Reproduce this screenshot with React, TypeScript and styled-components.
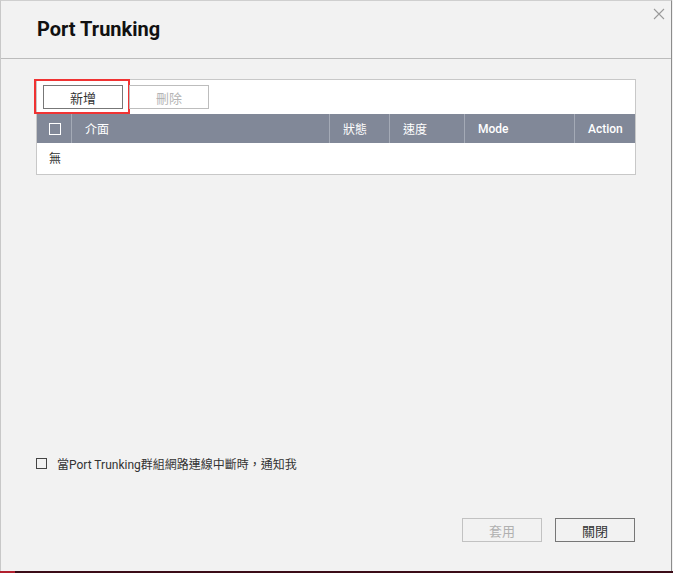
import React from 'react';
import styled, { createGlobalStyle } from 'styled-components';

const GlobalStyle = createGlobalStyle`
  html, body {
    margin: 0;
    padding: 0;
    background: #f0f0f0;
  }
  body {
    font-family: Roboto, 'Liberation Sans', 'Noto Sans CJK TC', sans-serif;
    color: #333;
  }
  * {
    box-sizing: border-box;
  }
`;

const columns = [
  { label: '介面', width: 258, latin: false },
  { label: '狀態', width: 60, latin: false },
  { label: '速度', width: 75, latin: false },
  { label: 'Mode', width: 110, latin: true },
  { label: 'Action', width: 0, latin: true },
];

export default function App() {
  return (
    <>
      <GlobalStyle />
      <Page>
        <Dialog>
          <Header>
            <Title>Port Trunking</Title>
            <CloseButton aria-label='close'>
              <svg width='12' height='12' viewBox='0 0 12 12'>
                <path d='M1 1 L11 11 M11 1 L1 11' stroke='#9a9a9a' strokeWidth='1.1' />
              </svg>
            </CloseButton>
          </Header>
          <Body>
            <Panel>
              <Toolbar>
                <Highlight>
                  <ToolButton>新增</ToolButton>
                </Highlight>
                <ToolButton disabled>刪除</ToolButton>
              </Toolbar>
              <Table>
                <HeadRow>
                  <CheckCell>
                    <HeadCheck />
                  </CheckCell>
                  {columns.map((c) => (
                    <HeadCell key={c.label} $width={c.width} $latin={c.latin}>
                      {c.label}
                    </HeadCell>
                  ))}
                </HeadRow>
                <EmptyRow>無</EmptyRow>
              </Table>
            </Panel>
            <Spacer />
            <NotifyRow>
              <Check />
              <NotifyText>當Port Trunking群組網路連線中斷時，通知我</NotifyText>
            </NotifyRow>
            <Footer>
              <FooterButton disabled>套用</FooterButton>
              <FooterButton>關閉</FooterButton>
            </Footer>
          </Body>
        </Dialog>
        <BottomStrip />
      </Page>
    </>
  );
}

const Page = styled.div`
  width: 673px;
  height: 573px;
  display: flex;
  flex-direction: column;
  overflow: hidden;
`;

const Dialog = styled.div`
  position: relative;
  width: 672px;
  height: 571px;
  background: #f2f2f2;
  border-top: 1px solid #cfcfcf;
  border-left: 1px solid #c8c8c8;
  border-right: 1px solid #8c8c8c;
  display: flex;
  flex-direction: column;
`;

const Header = styled.div`
  height: 58px;
  flex-shrink: 0;
  border-bottom: 1px solid #bcbcbc;
  display: flex;
  align-items: center;
  padding-left: 36px;
  padding-bottom: 1px;
`;

const Title = styled.h1`
  margin: 0;
  font-size: 20px;
  font-weight: 700;
  color: #111;
  font-family: Roboto, 'Liberation Sans', sans-serif;
`;

const CloseButton = styled.div`
  position: absolute;
  top: 7px;
  right: 6px;
  width: 12px;
  height: 12px;
  display: flex;
  cursor: pointer;
`;

const Body = styled.div`
  flex: 1;
  display: flex;
  flex-direction: column;
  padding: 20px 36px 29px 35px;
`;

const Panel = styled.div`
  width: 600px;
  background: #fff;
  border: 1px solid #c8c8c8;
`;

const Toolbar = styled.div`
  height: 34px;
  display: flex;
  align-items: flex-start;
  gap: 6px;
  padding: 5px 0 0 6px;
`;

const Highlight = styled.div`
  margin: -6px -7px 0 -9px;
  padding: 4px 5px 3px 7px;
  border: 2px solid #f03333;
  display: flex;
`;

const ToolButton = styled.button`
  width: 80px;
  height: 24px;
  background: #fff;
  border: 1px solid ${(p) => (p.disabled ? '#bdbdbd' : '#777')};
  color: ${(p) => (p.disabled ? '#b5b5b5' : '#333')};
  font-size: 13px;
  font-family: Roboto, 'Liberation Sans', 'Noto Sans CJK TC', sans-serif;
  padding: 0;
  cursor: pointer;
`;

const Table = styled.div`
  display: flex;
  flex-direction: column;
`;

const HeadRow = styled.div`
  height: 29px;
  display: flex;
  background: #818898;
  color: #fff;
  font-size: 12px;
`;

const CheckCell = styled.div`
  width: 35px;
  display: flex;
  align-items: center;
  justify-content: center;
  padding-left: 1px;
  border-right: 1px solid #a4aab6;
`;

const HeadCheck = styled.div`
  width: 12px;
  height: 12px;
  border: 1.5px solid #fff;
`;

const HeadCell = styled.div<{ $width: number; $latin: boolean }>`
  ${(p) => (p.$width ? `width: ${p.$width}px; border-right: 1px solid #a4aab6;` : 'flex: 1;')}
  display: flex;
  align-items: center;
  padding-left: 13px;
  font-weight: ${(p) => (p.$latin ? 500 : 400)};
`;

const EmptyRow = styled.div`
  height: 31px;
  display: flex;
  align-items: center;
  padding-left: 12px;
  padding-bottom: 2px;
  font-size: 12px;
  color: #333;
`;

const Spacer = styled.div`
  flex: 1;
`;

const NotifyRow = styled.div`
  display: flex;
  align-items: center;
  gap: 10px;
  margin-bottom: 46px;
`;

const Check = styled.div`
  width: 11px;
  height: 11px;
  border: 1px solid #444;
`;

const NotifyText = styled.span`
  font-size: 12px;
  color: #333;
  font-family: Roboto, 'Liberation Sans', 'Noto Sans CJK TC', sans-serif;
`;

const Footer = styled.div`
  display: flex;
  justify-content: flex-end;
  gap: 13px;
`;

const FooterButton = styled.button`
  width: 80px;
  height: 24px;
  background: #f2f2f2;
  border: 1px solid ${(p) => (p.disabled ? '#c2c2c2' : '#777')};
  color: ${(p) => (p.disabled ? '#b0b0b0' : '#333')};
  font-size: 13px;
  font-family: Roboto, 'Liberation Sans', 'Noto Sans CJK TC', sans-serif;
  padding: 0;
  cursor: pointer;
`;

const BottomStrip = styled.div`
  height: 2px;
  background: linear-gradient(to right, #b1202e 0 15px, #3b0c17 15px);
`;
